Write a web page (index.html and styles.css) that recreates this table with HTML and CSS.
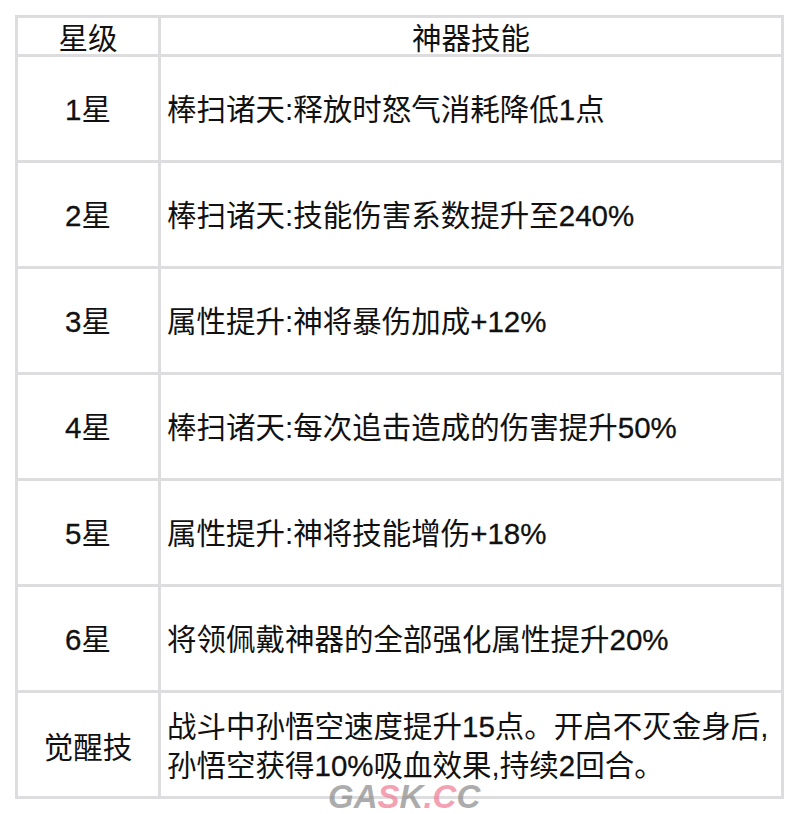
FILE: index.html
```html
<!DOCTYPE html>
<html lang="zh">
<head>
<meta charset="utf-8">
<link rel="stylesheet" href="styles.css">
</head>
<body>
<div class="wrap">
<table class="skills">
  <tr class="head"><td class="c1">星级</td><td class="c2 center">神器技能</td></tr>
  <tr><td class="c1"><span class="n">1</span>星</td><td class="c2">棒扫诸天<span class="p1">:</span>释放时怒气消耗降低<span class="n">1</span>点</td></tr>
  <tr><td class="c1"><span class="n">2</span>星</td><td class="c2">棒扫诸天<span class="p1">:</span>技能伤害系数提升至<span class="n">240%</span></td></tr>
  <tr><td class="c1"><span class="n">3</span>星</td><td class="c2">属性提升<span class="p1">:</span>神将暴伤加成<span class="n">+12%</span></td></tr>
  <tr><td class="c1"><span class="n">4</span>星</td><td class="c2">棒扫诸天<span class="p1">:</span>每次追击造成的伤害提升<span class="n">50%</span></td></tr>
  <tr><td class="c1"><span class="n">5</span>星</td><td class="c2">属性提升<span class="p1">:</span>神将技能增伤<span class="n">+18%</span></td></tr>
  <tr><td class="c1"><span class="n">6</span>星</td><td class="c2">将领佩戴神器的全部强化属性提升<span class="n">20%</span></td></tr>
  <tr class="last"><td class="c1">觉醒技</td><td class="c2">战斗中孙悟空速度提升<span class="n">15</span>点。开启不灭金身后<span class="p1">,</span><br>孙悟空获得<span class="n">10%</span>吸血效果<span class="p1">,</span>持续<span class="n">2</span>回合。</td></tr>
</table>
<div class="mark"><span class="g">G</span><span class="g">A</span><span class="p">S</span><span class="g">K</span><span class="p">.</span><span class="p">C</span><span class="g">C</span></div>
</div>
</body>
</html>
```
FILE: styles.css
```css
html, body {
  margin: 0;
  padding: 0;
  background: #ffffff;
}
html {
  min-height: 814px;
}
body {
  padding: 15px 0 17px 15px;
  font-family: "Noto Sans CJK SC", "Liberation Sans", sans-serif;
  color: #111111;
}
.wrap {
  position: relative;
  width: 769px;
}
.skills {
  border-collapse: collapse;
  width: 769px;
  font-size: 29.5px;
  line-height: 36px;
}
.skills td {
  border: 3px solid #dddde0;
  padding: 0 6px;
  vertical-align: middle;
}
.skills tr {
  height: 106px;
}
.skills tr.head {
  height: 39px;
}
.skills tr.head td {
  line-height: 33px;
}
.skills td.c1 {
  width: 128px;
  text-align: center;
}
.skills td.center {
  text-align: center;
}
.n {
  font-family: "Liberation Sans", sans-serif;
  font-size: 29.5px;
  -webkit-text-stroke: 0.3px #111111;
}
.p1 {
  font-family: "Liberation Sans", sans-serif;
  font-size: 29.5px;
}
.mark {
  position: absolute;
  left: 313px;
  top: 765px;
  font-family: "Liberation Sans", sans-serif;
  font-weight: bold;
  font-style: italic;
  font-size: 33px;
  line-height: 34px;
  color: #8a8a8a;
  opacity: 0.7;
}
.mark .g { color: #8a8a8a; }
.mark .p { color: #f07a93; }
```
